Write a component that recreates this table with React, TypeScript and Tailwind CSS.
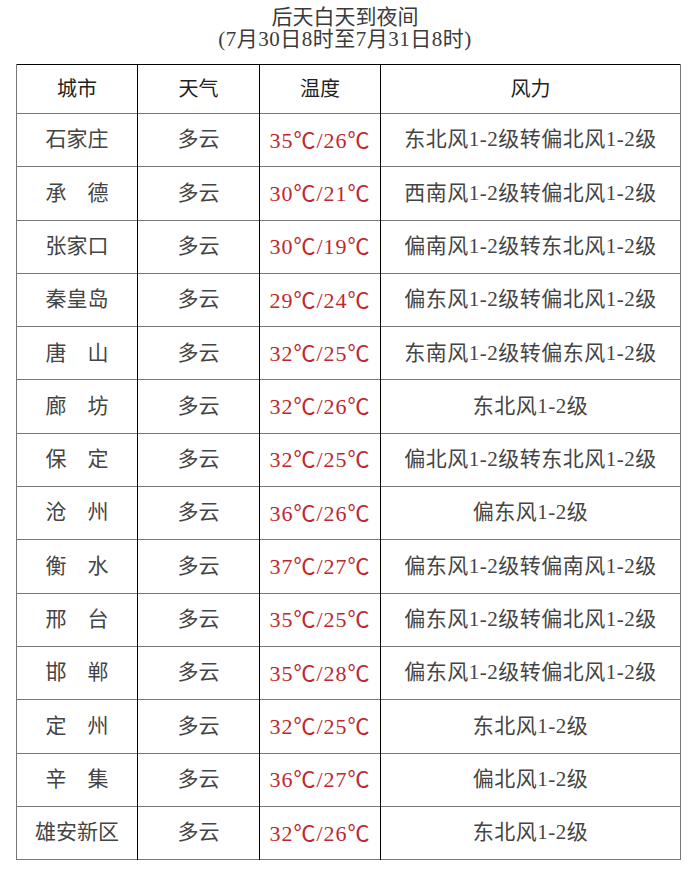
const rows: [string, string, string][] = [
  ['石家庄', '35℃/26℃', '东北风1-2级转偏北风1-2级'],
  ['承　德', '30℃/21℃', '西南风1-2级转偏北风1-2级'],
  ['张家口', '30℃/19℃', '偏南风1-2级转东北风1-2级'],
  ['秦皇岛', '29℃/24℃', '偏东风1-2级转偏北风1-2级'],
  ['唐　山', '32℃/25℃', '东南风1-2级转偏东风1-2级'],
  ['廊　坊', '32℃/26℃', '东北风1-2级'],
  ['保　定', '32℃/25℃', '偏北风1-2级转东北风1-2级'],
  ['沧　州', '36℃/26℃', '偏东风1-2级'],
  ['衡　水', '37℃/27℃', '偏东风1-2级转偏南风1-2级'],
  ['邢　台', '35℃/25℃', '偏东风1-2级转偏北风1-2级'],
  ['邯　郸', '35℃/28℃', '偏东风1-2级转偏北风1-2级'],
  ['定　州', '32℃/25℃', '东北风1-2级'],
  ['辛　集', '36℃/27℃', '偏北风1-2级'],
  ['雄安新区', '32℃/26℃', '东北风1-2级'],
];

const font = { fontFamily: '"Liberation Serif", "Noto Sans CJK SC", serif' };

export default function App() {
  return (
    <div className="w-[690px] h-[892px] bg-white text-[#444]" style={font}>
      <div className="pt-[6px] text-center text-[21px] leading-[22px] text-[#3a3a3a]">
        <div>后天白天到夜间</div>
        <div className="tracking-[0.5px]">(7月30日8时至7月31日8时)</div>
      </div>
      <table className="mt-[14px] ml-[16px] w-[665px] border-collapse table-fixed text-[21px]">
        <colgroup>
          <col className="w-[121px]" />
          <col className="w-[122px]" />
          <col className="w-[121px]" />
          <col />
        </colgroup>
        <thead>
          <tr className="h-[49px] border-t border-t-black border-b border-b-[#777]">
            <th className="font-normal text-[20px] border-l border-l-[#777] border-r border-r-black text-[#222]">城市</th>
            <th className="font-normal text-[20px] border-r border-r-black text-[#222]">天气</th>
            <th className="font-normal text-[20px] border-r border-r-black text-[#222]">温度</th>
            <th className="font-normal text-[20px] border-r border-r-[#777] text-[#222]">风力</th>
          </tr>
        </thead>
        <tbody>
          {rows.map(([city, temp, wind]) => (
            <tr key={city} className="h-[53.3px] border-b border-b-[#777]">
              <td className="text-center border-l border-l-[#777] border-r border-r-black whitespace-pre">{city}</td>
              <td className="text-center border-r border-r-black">多云</td>
              <td className="text-center border-r border-r-black text-[#c0272d] text-[22px] tracking-[1px]">{temp}</td>
              <td className="text-center border-r border-r-[#777] tracking-[0.5px]">{wind}</td>
            </tr>
          ))}
        </tbody>
      </table>
    </div>
  );
}
